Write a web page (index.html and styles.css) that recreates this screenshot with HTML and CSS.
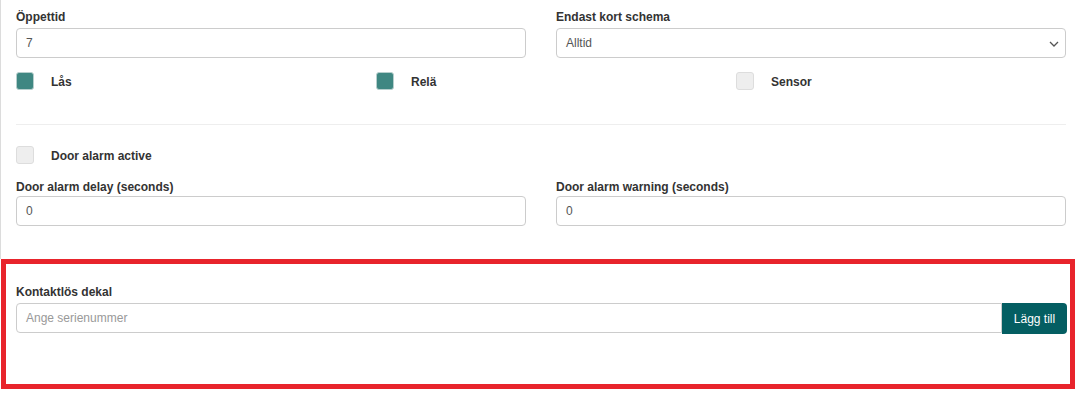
FILE: index.html
```html
<!DOCTYPE html>
<html lang="sv">
<head>
<meta charset="utf-8">
<title>Dörrinställningar</title>
<link rel="stylesheet" href="styles.css">
</head>
<body>
<div class="panel">
  <div class="row two">
    <div class="form-group">
      <label class="lbl">Öppettid</label>
      <div class="input">7</div>
    </div>
    <div class="form-group">
      <label class="lbl">Endast kort schema</label>
      <div class="input select">
        <span>Alltid</span>
        <svg class="chev" width="10" height="6" viewBox="0 0 10 6"><path d="M1 1l4 4 4-4" fill="none" stroke="#555" stroke-width="1.3"/></svg>
      </div>
    </div>
  </div>
  <div class="row three checks">
    <div class="check"><span class="box on"></span><span class="clbl">Lås</span></div>
    <div class="check"><span class="box on"></span><span class="clbl">Relä</span></div>
    <div class="check"><span class="box"></span><span class="clbl">Sensor</span></div>
  </div>
  <hr class="sep">
  <div class="check alarm"><span class="box"></span><span class="clbl">Door alarm active</span></div>
  <div class="row two tight">
    <div class="form-group">
      <label class="lbl">Door alarm delay (seconds)</label>
      <div class="input">0</div>
    </div>
    <div class="form-group">
      <label class="lbl">Door alarm warning (seconds)</label>
      <div class="input">0</div>
    </div>
  </div>
</div>
<div class="highlight">
  <label class="lbl">Kontaktlös dekal</label>
  <div class="group">
    <div class="input grow placeholder">Ange serienummer</div>
    <button class="btn">Lägg till</button>
  </div>
</div>
</body>
</html>
```
FILE: styles.css
```css
* { box-sizing: border-box; }
body {
  margin: 0;
  font-family: "Liberation Sans", Arial, sans-serif;
  font-size: 12px;
  color: #333;
  background: #fff;
}
.panel {
  border-left: 1px solid #dcdcdc;
  padding: 10px 15px 0 15px;
  height: 259px;
}
.row { display: grid; column-gap: 30px; }
.row.two { grid-template-columns: 1fr 1fr; }
.row.three { grid-template-columns: 1fr 1fr 1fr; }
.lbl {
  display: block;
  font-weight: bold;
  line-height: 14px;
  margin-bottom: 4px;
}
.tight .lbl { margin-bottom: 2px; }
.input {
  height: 30px;
  border: 1px solid #ccc;
  border-radius: 4px;
  padding: 0 9px;
  display: flex;
  align-items: center;
  color: #555;
  background: #fff;
}
.select { justify-content: space-between; padding-right: 6px; }
.chev { margin-top: 1px; }
.checks { margin-top: 14px; }
.check { display: flex; align-items: center; height: 18px; }
.box {
  width: 18px;
  height: 18px;
  border-radius: 3px;
  border: 1px solid #ddd;
  background: #eee;
  flex: none;
}
.box.on { background: #3f8782; border-color: #b7cfcd; }
.clbl { margin-left: 17px; font-weight: bold; padding-top: 1px; }
.sep {
  border: 0;
  border-top: 1px solid #eee;
  margin: 34px 0 21px;
}
.alarm { margin-bottom: 16px; }
.highlight {
  margin-left: 1px;
  width: 1074px;
  border: 5px solid #e8242c;
  padding: 21px 3px 50px 10px;
}
.group { display: flex; }
.grow { flex: 1; border-radius: 4px 0 0 4px; }
.placeholder { color: #999; }
.btn {
  height: 31px;
  width: 65px;
  border: 0;
  border-radius: 0 4px 4px 0;
  background: #045e62;
  color: #fff;
  font-family: inherit;
  font-size: 12px;
  padding: 0;
}
```
